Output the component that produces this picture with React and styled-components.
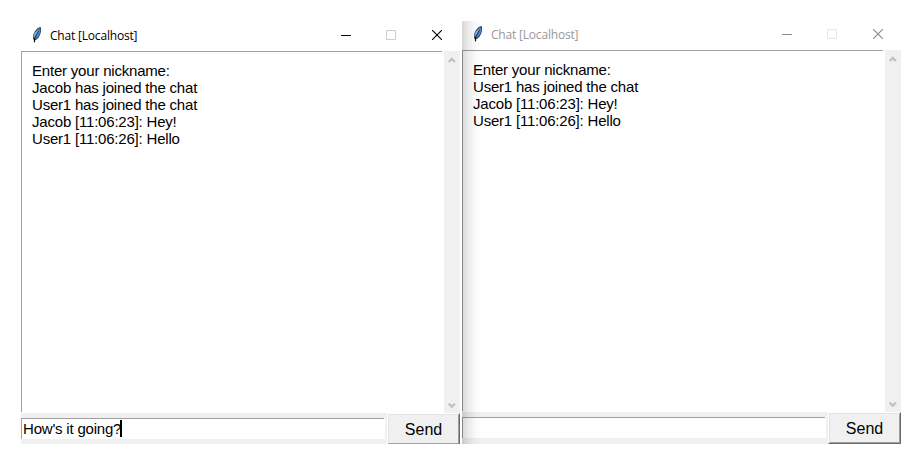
import React from 'react';
import styled, { createGlobalStyle } from 'styled-components';

const GlobalStyle = createGlobalStyle`
  * { box-sizing: border-box; }
  body { margin: 0; background: #fff; }
`;

const Desktop = styled.main`
  display: flex;
  gap: 2px;
  width: 922px;
  height: 465px;
  padding: 21px 21px 0;
  overflow: hidden;
  font-family: "Liberation Sans", Arial, sans-serif;
  color: #000;
`;

const Window = styled.section`
  position: relative;
  display: flex;
  flex-direction: column;
  width: 439px;
  height: 423px;
  background: #fff;
`;

const EdgeShadow = styled.div`
  position: absolute;
  inset: 0 auto 0 0;
  width: 20px;
  pointer-events: none;
  background: linear-gradient(to right, rgba(0, 0, 0, 0.16), rgba(0, 0, 0, 0.08) 32%, rgba(0, 0, 0, 0.02) 68%, transparent);
`;

const TitleBar = styled.header`
  display: flex;
  align-items: flex-start;
  height: ${(p) => (p.$active ? 30 : 29)}px;
  padding: ${(p) => (p.$active ? 6 : 5)}px 18px 0 10px;
  color: ${(p) => (p.$active ? '#000' : '#999')};
`;

const Title = styled.h1`
  flex: 1;
  margin: 0 0 0 8px;
  font: 400 12px/17px "Open Sans", "Noto Sans", sans-serif;
  letter-spacing: -0.19px;
  white-space: nowrap;
`;

const Controls = styled.div`
  display: flex;
  gap: 35px;
  padding-top: 3px;
  svg { display: block; }
  svg:last-child { margin-left: 1px; }
`;

const Body = styled.div`
  display: flex;
  height: 362px;
`;

const Log = styled.div`
  width: 421px;
  margin-right: 2px;
  height: 361px;
  padding: 10px;
  border: solid #a0a0a0;
  border-width: 1px 0 0 1px;
  font-size: 15px;
  line-height: 17px;
  letter-spacing: -0.2px;
  white-space: nowrap;
`;

const Scrollbar = styled.div`
  display: flex;
  flex-direction: column;
  justify-content: space-between;
  align-items: center;
  width: 16px;
  padding: 6px 0 4px;
  background: #f0f0f0;
`;

const Footer = styled.form`
  display: flex;
  height: ${(p) => (p.$active ? 31 : 32)}px;
  background: #f0f0f0;
`;

const Entry = styled.div`
  display: flex;
  width: 363px;
  height: 21px;
  margin-top: 5px;
  padding-left: 1px;
  background: #fff;
  border: solid #a0a0a0;
  border-width: 1px 0 0 1px;
  font-size: 15px;
  line-height: 19px;
  letter-spacing: -0.2px;
`;

const EntryEdge = styled.div`
  width: 1px;
  height: 21px;
  margin: 5px 2px 0 0;
  background: #fff;
`;

const Caret = styled.span`
  width: 2px;
  height: 17px;
  margin: 1px 0 0 -1px;
  background: #000;
`;

const ButtonFrame = styled.div`
  display: flex;
  width: 73px;
  border: solid;
  border-width: 1px 1px ${(p) => (p.$active ? 0 : 1)}px 1px;
  border-color: #fff #696969 #696969 #fff;
`;

const SendButton = styled.button`
  flex: 1;
  padding: 2px 0 0;
  border: 1px solid;
  border-color: #e3e3e3 #a0a0a0 #a0a0a0 #e3e3e3;
  background: #f0f0f0;
  color: #000;
  font: 16px/26px "Liberation Sans", Arial, sans-serif;
`;

function Feather() {
  return (
    <svg width="11" height="16" viewBox="0 0 11 16">
      <path d="M8.5 .3H10v4.5L9 8 7.5 10.8 5 13H3L2 12V8L4 4 6.5 1.3Z" fill="#36465c" />
      <path d="M9 1 9.3 4.8 8 8.2 5.8 11 4 12 6.3 6.5Z" fill="#3f8add" />
      <path d="m8.5 1.3-4 3.6L2.7 8v3.3L5.5 6.8Z" fill="#8dbbe8" />
      <path d="M7.4 4 5 8.5 3.4 12" fill="none" stroke="#182130" strokeWidth=".6" />
      <path d="M3.5 11.5v3.8" stroke="#000" strokeWidth="1.2" />
    </svg>
  );
}

function WindowControls({ active }) {
  const ink = active ? '#000' : '#888';
  return (
    <Controls>
      <svg width="10" height="10"><path d="M0 5.5h10" stroke={ink} /></svg>
      <svg width="10" height="10"><path d="M.5.5h9v9h-9z" fill="none" stroke={active ? '#ccc' : '#e7e7e7'} /></svg>
      <svg width="10" height="10"><path d="m0 0 10 10m0-10L0 10" stroke={ink} strokeWidth="1.1" /></svg>
    </Controls>
  );
}

function Arrow({ down }) {
  return (
    <svg width="8" height="7" viewBox="0 0 8 7">
      <path d={down ? 'm.7 1.6 3.1 3.1 3.1-3.1' : 'm.7 5 3.1-3.1L6.9 5'} fill="none" stroke="#bfbfbf" strokeWidth="2.2" />
    </svg>
  );
}

function ChatWindow({ active, messages, draft }) {
  return (
    <Window>
      <TitleBar $active={active}>
        <Feather />
        <Title>Chat [Localhost]</Title>
        <WindowControls active={active} />
      </TitleBar>
      <Body>
        <Log>{messages.map((message) => <div key={message}>{message}</div>)}</Log>
        <Scrollbar><Arrow /><Arrow down /></Scrollbar>
      </Body>
      <Footer $active={active} onSubmit={(e) => e.preventDefault()}>
        <Entry>{draft}{draft && <Caret />}</Entry>
        <EntryEdge />
        <ButtonFrame $active={active}><SendButton>Send</SendButton></ButtonFrame>
      </Footer>
      {!active && <EdgeShadow />}
    </Window>
  );
}

export default function App() {
  return (
    <>
      <GlobalStyle />
      <Desktop>
        <ChatWindow
          active
          draft="How's it going?"
          messages={['Enter your nickname:', 'Jacob has joined the chat', 'User1 has joined the chat', 'Jacob [11:06:23]: Hey!', 'User1 [11:06:26]: Hello']}
        />
        <ChatWindow
          messages={['Enter your nickname:', 'User1 has joined the chat', 'Jacob [11:06:23]: Hey!', 'User1 [11:06:26]: Hello']}
        />
      </Desktop>
    </>
  );
}
